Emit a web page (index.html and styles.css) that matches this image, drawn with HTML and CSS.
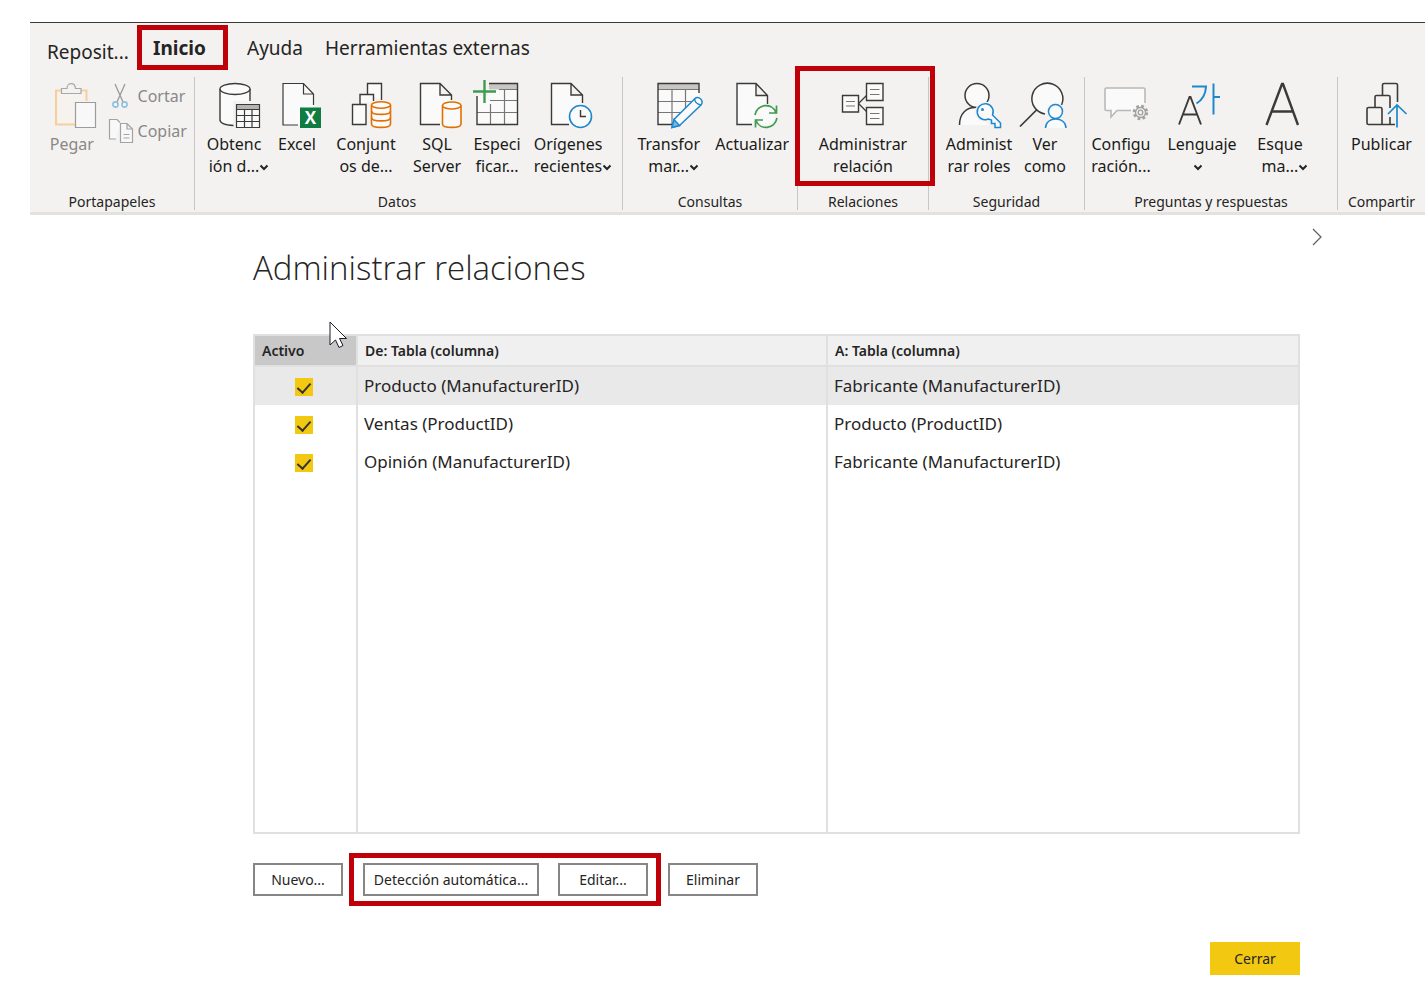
FILE: index.html
```html
<!DOCTYPE html>
<html lang="es">
<head>
<meta charset="utf-8">
<meta name="viewport" content="width=device-width, initial-scale=1">
<title>Administrar relaciones</title>
<link rel="stylesheet" href="styles.css">
</head>
<body>
<header class="ribbon">
  <nav class="tabs" aria-label="Cinta">
    <button type="button" class="tab tab-file">Reposit...</button>
    <button type="button" class="tab tab-active">Inicio</button>
    <button type="button" class="tab tab-help">Ayuda</button>
    <button type="button" class="tab tab-tools">Herramientas externas</button>
  </nav>
  <div class="groups">
    <section class="group">
      <div class="items items-clipboard">
        <button type="button" class="tool" disabled>
          <svg class="icon" viewBox="0 0 56 50"><path d="M17 10.500H12V44.500H31" fill="#fbf0dc" stroke="#f5cfa0" stroke-width="2"/><path d="M37 10.500H42.500V21" fill="none" stroke="#f5cfa0" stroke-width="2"/><path d="M14 13H41V21H30V43H14Z" fill="#f6f3ee"/><path d="M17.500 13.500V8.500H23C23 2 31 2 31.500 8.500H37V13.500Z" fill="#f3f2f0" stroke="#a8a8a8" stroke-width="1.200"/><path d="M31.500 22.500h20v25h-20z" fill="#f8f8f8" stroke="#9c9c9c" stroke-width="1.200"/></svg>
          <span class="label">Pegar</span>
        </button>
        <div class="small-tools">
          <button type="button" class="small-tool" disabled>
            <svg class="small-icon" viewBox="0 0 26 26"><path d="M7 1l8 18M17 1L9 19" fill="none" stroke="#999" stroke-width="1.300"/><circle cx="7.500" cy="21.500" r="2.600" fill="none" stroke="#8fc0e0" stroke-width="1.600"/><circle cx="16.500" cy="21.500" r="2.600" fill="none" stroke="#8fc0e0" stroke-width="1.600"/></svg>
            <span>Cortar</span>
          </button>
          <button type="button" class="small-tool" disabled>
            <svg class="small-icon" viewBox="0 0 26 26"><g fill="#f8f8f8" stroke="#a3a3a3" stroke-width="1.200"><path d="M8 21H1.500V1.500H9L12 4.500"/><path d="M12.500 5.500H19L24.500 11V24.500H12.500ZM19 5.500V11H24.500M15.500 16.500H21.500M15.500 20H21.500"/></g></svg>
            <span>Copiar</span>
          </button>
        </div>
      </div>
      <h2 class="group-name">Portapapeles</h2>
    </section>

    <section class="group">
      <div class="items items-data">
        <button type="button" class="tool">
          <svg class="icon" viewBox="0 0 56 50"><path d="M14 9V40c0 3 6 5 13 5.500V21H44V9" fill="#fafafa"/><path d="M27.500 45.500C20 45 14 43 14 40V9M44 9V21" fill="none" stroke="#3b3a39" stroke-width="1.400"/><ellipse cx="29" cy="9" rx="15" ry="5.500" fill="#fafafa" stroke="#3b3a39" stroke-width="1.400"/><path d="M30.500 24.500h23v23h-23z" fill="#fafafa"/><path d="M30.500 24.500h23v4.500h-23z" fill="#b5b2b0"/><path d="M30.500 24.500h23v23h-23zM30.500 29.500h23M30.500 35.500h23M30.500 41.500h23M38.500 29.500v18M46 29.500v18" fill="none" stroke="#3b3a39" stroke-width="1.200"/></svg>
          <span class="label">Obtenc<br>ión d...<svg class="chevron" viewBox="0 0 10 10"><path d="M1.500 3.500L5 7L8.500 3.500"/></svg></span>
        </button>
        <button type="button" class="tool">
          <svg class="icon" viewBox="0 0 56 50"><path d="M14 3.500H34.500L44.500 14V45H14Z" fill="#fafafa"/><path d="M29 45H14V3.500H34.500L44.500 14V25M34.500 3.500V14H44.500" fill="none" stroke="#3b3a39" stroke-width="1.200"/><path d="M31 27.500h21v20.500h-21z" fill="#107c41"/><text x="41.500" y="44" class="icon-letter">X</text></svg>
          <span class="label">Excel</span>
        </button>
        <button type="button" class="tool">
          <svg class="icon" viewBox="0 0 56 50"><g fill="#fafafa" stroke="#3b3a39" stroke-width="1.400"><path d="M29.500 14V3.500H43.500V20"/><path d="M22 24V14.500H35.500V21"/><path d="M14.500 24.500H28V44.500H14.500Z"/></g><path d="M33.500 25V44c0 4.500 19 4.500 19 0V25" fill="#fafafa" stroke="#e07000" stroke-width="1.600"/><ellipse cx="43" cy="25" rx="9.500" ry="3.300" fill="#fafafa" stroke="#e07000" stroke-width="1.600"/><path d="M33.500 31c0 4.500 19 4.500 19 0M33.500 37.500c0 4.500 19 4.500 19 0" fill="none" stroke="#e07000" stroke-width="1.600"/></svg>
          <span class="label">Conjunt<br>os de...</span>
        </button>
        <button type="button" class="tool">
          <svg class="icon" viewBox="0 0 56 50"><path d="M31 44.500H11.500V3.500H31L42.500 15V20M31 3.500V15H42.500" fill="#fafafa" stroke="#3b3a39" stroke-width="1.400"/><path d="M33.500 25.500V44c0 4.500 18.500 4.500 18.500 0V25.500" fill="#fafafa" stroke="#e07000" stroke-width="1.600"/><ellipse cx="42.750" cy="25.500" rx="9.250" ry="3.500" fill="#fafafa" stroke="#e07000" stroke-width="1.600"/></svg>
          <span class="label">SQL<br>Server</span>
        </button>
        <button type="button" class="tool">
          <svg class="icon" viewBox="0 0 56 50"><path d="M8 16h11V9h29.500v35.500H8z" fill="#fafafa"/><path d="M20 3.500h28.500v6H20z" fill="#c8c6c4"/><path d="M30 9.500H48M21 20.500H48M8 32.500H48M21.500 24V44M35.500 9.500V44" fill="none" stroke="#797775" stroke-width="1.200"/><path d="M20 3.500H48.500V44.500H8V16" fill="none" stroke="#3b3a39" stroke-width="1.400"/><path d="M15.500 0V23M4 11.500H27" fill="none" stroke="#3f9b50" stroke-width="2.400"/></svg>
          <span class="label">Especi<br>ficar...</span>
        </button>
        <button type="button" class="tool">
          <svg class="icon" viewBox="0 0 56 50"><path d="M29 44.500H11.500V3.500H31L42.500 15V23M31 3.500V15H42.500" fill="#fafafa" stroke="#3b3a39" stroke-width="1.400"/><circle cx="40.500" cy="36.500" r="11" fill="#fafafa" stroke="#1e88cf" stroke-width="1.600"/><path d="M40.500 30V36.500H46" fill="none" stroke="#3b3a39" stroke-width="1.400"/></svg>
          <span class="label">Orígenes<br>recientes<svg class="chevron" viewBox="0 0 10 10"><path d="M1.500 3.500L5 7L8.500 3.500"/></svg></span>
        </button>
      </div>
      <h2 class="group-name group-name-data">Datos</h2>
    </section>

    <section class="group">
      <div class="items items-queries">
        <button type="button" class="tool">
          <svg class="icon" viewBox="0 0 56 50"><path d="M17 3.500h41v41H17z" fill="#fafafa"/><path d="M17 3.500h41v6H17z" fill="#c8c6c4"/><path d="M17 9.500H58M17 21.500H50M17 32.500H40M31 9.500V44M44.500 9.500V28" fill="none" stroke="#797775" stroke-width="1.200"/><path d="M31 44.500H17V3.500H58V13" fill="none" stroke="#3b3a39" stroke-width="1.400"/><path d="M41 46H60V24Z" fill="#f3f2f0"/><path d="M31 47.500L33 39.500L54 18.500C57 15 63.500 20.500 60 25L38.500 45.500Z" fill="#fafafa" stroke="#1e88cf" stroke-width="1.500"/><path d="M31 47.500L33 39.500L38.500 45.500Z" fill="#7ab8e6" stroke="#1e88cf" stroke-width="1.500"/><path d="M53.500 18.500Q54 24 60 25" fill="none" stroke="#1e88cf" stroke-width="1.500"/></svg>
          <span class="label">Transfor<br>mar...<svg class="chevron" viewBox="0 0 10 10"><path d="M1.500 3.500L5 7L8.500 3.500"/></svg></span>
        </button>
        <button type="button" class="tool">
          <svg class="icon" viewBox="0 0 56 50"><path d="M28 44.500H13V3.500H32L43.500 15.500V24M32 3.500V15.500H43.500" fill="#fafafa" stroke="#3b3a39" stroke-width="1.400"/><circle cx="42" cy="36.500" r="9" fill="#fafafa"/><path d="M31 35C33 24 48 22 52 32.500M52.500 25.500V33H45M53 38C51 49 36 51 32 40.500M31.500 47.500V40H39" fill="none" stroke="#3f9b50" stroke-width="1.700"/></svg>
          <span class="label">Actualizar</span>
        </button>
      </div>
      <h2 class="group-name">Consultas</h2>
    </section>

    <section class="group group-marked">
      <div class="items items-single">
        <button type="button" class="tool">
          <svg class="icon" viewBox="0 0 56 50"><path d="M31.500 15.500L23.500 23.500L31.500 31.500" fill="none" stroke="#3b3a39" stroke-width="1.300"/><path d="M7.500 15.500h16v16.500h-16zM31.500 3.500h16.500v17h-16.500zM31.500 27.500h16.500v17h-16.500z" fill="#fafafa" stroke="#3b3a39" stroke-width="1.400"/><path d="M11 21.500h9M11 26h9M35 9.500h9.500M35 14.500h9.500M35 33.500h9.500M35 38.500h9.500" stroke="#797775" stroke-width="1.200"/></svg>
          <span class="label">Administrar<br>relación</span>
        </button>
      </div>
      <h2 class="group-name">Relaciones</h2>
    </section>

    <section class="group">
      <div class="items items-security">
        <button type="button" class="tool">
          <svg class="icon" viewBox="0 0 56 50"><path d="M8.500 45C8.500 33 16 27.500 24 27.500L32 38L38 45Z" fill="#fafafa"/><path d="M8.500 45C8.500 33 16 27.500 24 27.500" fill="none" stroke="#3b3a39" stroke-width="1.500"/><circle cx="26" cy="15.500" r="12" fill="#fafafa" stroke="#3b3a39" stroke-width="1.500"/><path d="M41.500 35L49.500 43V47.500H44V43.500H40.500V40L37.500 39A8 8 0 1 1 41.500 35Z" fill="#fafafa" stroke="#f3f2f0" stroke-width="4"/><path d="M41.500 35L49.500 43V47.500H44V43.500H40.500V40L37.500 39A8 8 0 1 1 41.500 35Z" fill="#fafafa" stroke="#1e88cf" stroke-width="1.500"/><circle cx="31.500" cy="29.500" r="1.500" fill="#1e88cf"/></svg>
          <span class="label">Administ<br>rar roles</span>
        </button>
        <button type="button" class="tool">
          <svg class="icon" viewBox="0 0 56 50"><path d="M28 34A15.500 15.500 0 1 1 44.500 25" fill="#fafafa" stroke="#3b3a39" stroke-width="1.500"/><path d="M19.500 30L3 46.500" fill="none" stroke="#3b3a39" stroke-width="1.700"/><circle cx="38.500" cy="31.500" r="9" fill="#f3f2f0"/><circle cx="38.500" cy="31.500" r="7" fill="#fafafa" stroke="#1e88cf" stroke-width="1.500"/><path d="M28.500 48C28.500 36 49 36 49 48" fill="#fafafa" stroke="#1e88cf" stroke-width="1.500"/></svg>
          <span class="label">Ver<br>como</span>
        </button>
      </div>
      <h2 class="group-name">Seguridad</h2>
    </section>

    <section class="group">
      <div class="items items-qa">
        <button type="button" class="tool">
          <svg class="icon" viewBox="0 0 56 50"><path d="M38 30.500H24L18 37V30.500H13.500Q12 30.500 12 29V9.500Q12 8 13.500 8H50.500Q52 8 52 9.500V23" fill="#fafafa" stroke="#b8b8b8" stroke-width="1.600"/><circle cx="47.500" cy="32.500" r="6.300" fill="none" stroke="#a0a0a0" stroke-width="2.800" stroke-dasharray="2.600 2.348"/><circle cx="47.500" cy="32.500" r="5" fill="#f3f2f0" stroke="#a0a0a0" stroke-width="1.300"/><circle cx="47.500" cy="32.500" r="2.300" fill="none" stroke="#a0a0a0" stroke-width="1.300"/></svg>
          <span class="label">Configu<br>ración...</span>
        </button>
        <button type="button" class="tool">
          <svg class="icon" viewBox="0 0 56 50"><path d="M5 44.500L15.500 17L16.500 17L27 44.500M8.500 34.500H23.500" fill="none" stroke="#3b3a39" stroke-width="1.900"/><path d="M18 6.500H32Q31.500 18 22.500 23.500M39.500 3.500V34.500M39.500 17H46" fill="none" stroke="#1e88cf" stroke-width="2"/></svg>
          <span class="label">Lenguaje<br><svg class="chevron chevron-alone" viewBox="0 0 10 10"><path d="M1.500 3.500L5 7L8.500 3.500"/></svg></span>
        </button>
        <button type="button" class="tool">
          <svg class="icon" viewBox="0 0 56 50"><path d="M14.500 45L30 4H31L46 45M19.500 31.500H41" fill="none" stroke="#3b3a39" stroke-width="2.400"/></svg>
          <span class="label">Esque<br>ma...<svg class="chevron" viewBox="0 0 10 10"><path d="M1.500 3.500L5 7L8.500 3.500"/></svg></span>
        </button>
      </div>
      <h2 class="group-name">Preguntas y respuestas</h2>
    </section>

    <section class="group">
      <div class="items items-single">
        <button type="button" class="tool">
          <svg class="icon" viewBox="0 0 56 50"><path d="M28.500 15V5Q28.500 3.500 30 3.500H42Q43.500 3.500 43.500 5V22M21 27V17Q21 15.500 22.500 15.500H34.500Q36 15.500 36 17V28M14.500 27.500H26.500Q28 27.500 28 29V44.500H14.500Q13 44.500 13 43V29Q13 27.500 14.500 27.500ZM28 44.500H41M36 37V44.500" fill="none" stroke="#3b3a39" stroke-width="1.600"/><path d="M43 47.500V25M34 34L43 25L52.500 34" fill="none" stroke="#1e88cf" stroke-width="1.700"/></svg>
          <span class="label">Publicar</span>
        </button>
      </div>
      <h2 class="group-name">Compartir</h2>
    </section>
  </div>
</header>

<main class="page">
  <button type="button" class="expand" aria-label="Expandir"><svg class="expand-icon" viewBox="0 0 10 18"><path d="M1 1L9 9L1 17"/></svg></button>
  <h1 class="title">Administrar relaciones</h1>
  <div class="table-wrap">
    <table class="relations">
      <colgroup><col class="col-active"><col><col></colgroup>
      <thead>
        <tr><th class="sorted" scope="col">Activo</th><th scope="col">De: Tabla (columna)</th><th scope="col">A: Tabla (columna)</th></tr>
      </thead>
      <tbody>
        <tr class="selected"><td class="check-cell"><input class="check" type="checkbox" aria-label="Producto activo" checked></td><td>Producto (ManufacturerID)</td><td>Fabricante (ManufacturerID)</td></tr>
        <tr><td class="check-cell"><input class="check" type="checkbox" aria-label="Ventas activo" checked></td><td>Ventas (ProductID)</td><td>Producto (ProductID)</td></tr>
        <tr><td class="check-cell"><input class="check" type="checkbox" aria-label="Opinión activo" checked></td><td>Opinión (ManufacturerID)</td><td>Fabricante (ManufacturerID)</td></tr>
        <tr class="filler"><td></td><td></td><td></td></tr>
      </tbody>
    </table>
    <svg class="pointer" viewBox="0 0 18 28"><path d="M1 1V24L6.500 19L10 26.500L14 24.500L10.500 17.500H17.500Z"/></svg>
  </div>
  <div class="actions">
    <button type="button" class="btn">Nuevo...</button>
    <div class="marked-actions">
      <button type="button" class="btn btn-wide">Detección automática...</button>
      <button type="button" class="btn">Editar...</button>
    </div>
    <button type="button" class="btn">Eliminar</button>
  </div>
  <div class="footer">
    <button type="button" class="btn btn-close">Cerrar</button>
  </div>
</main>
</body>
</html>
```
FILE: styles.css
```css
* { box-sizing: border-box; }

body {
  margin: 0;
  background: #fff;
  color: #252423;
  font-family: "Noto Sans", "Open Sans", sans-serif;
  font-size: 16px;
}

button {
  margin: 0;
  padding: 0;
  border: 0;
  background: none;
  color: inherit;
  font: inherit;
}

.ribbon {
  margin: 22px 0 0 30px;
  padding-bottom: 2px;
  border-top: 1px solid #3b3a39;
  border-bottom: 3px solid #e3e2e1;
  background: #f3f2f0;
  overflow: hidden;
}

.tabs {
  display: flex;
  align-items: flex-start;
  height: 54px;
  padding: 2px 0 0 17px;
}

.tab {
  height: 45px;
  font-size: 19px;
  white-space: nowrap;
}

.tab-file { width: 90px; padding-top: 8px; text-align: left; }
.tab-active { width: 91px; border: 5px solid #c00008; font-weight: 700; padding-right: 6px; }
.tab-help { width: 60px; margin-left: 17px; }
.tab-tools { margin-left: 20px; }

.groups {
  display: grid;
  grid-template-columns: 165fr 428fr 175fr 131fr 156fr 253fr 87fr;
}

.group {
  position: relative;
  display: flex;
  flex-direction: column;
  min-width: 0;
  border-right: 1px solid #c8c6c4;
}

.group:last-child { border-right: 0; }

.group-marked::after {
  content: "";
  position: absolute;
  inset: -11px -7px 24px -3px;
  z-index: 1;
  border: 5px solid #c00008;
}

.items {
  display: grid;
  height: 116px;
  padding-top: 3px;
}

.items-clipboard { grid-template-columns: 72fr 87fr; padding-left: 6px; }
.items-data { grid-template-columns: 66fr 60fr 78fr 64fr 56fr 86fr; padding: 3px 11px 0 6px; }
.items-queries { grid-template-columns: 80fr 88fr; padding: 3px 1px 0 6px; }
.items-single { grid-template-columns: 1fr; }
.items-security { grid-template-columns: 76fr 56fr; padding: 3px 11px 0 12px; }
.items-qa { grid-template-columns: 72fr 90fr 66fr; padding: 3px 24px 0 0; }

.tool {
  display: flex;
  flex-direction: column;
  align-items: center;
  gap: 3px;
  min-width: 0;
  color: #1b1a19;
}

.tool:disabled, .small-tool:disabled { color: #8a8886; }

.icon { flex: none; width: 56px; height: 50px; overflow: visible; }

.icon-letter {
  fill: #fff;
  font: 700 17px "Open Sans", sans-serif;
  text-anchor: middle;
}

.label { line-height: 22px; white-space: nowrap; }

.chevron {
  width: 10px;
  height: 10px;
  margin-right: -10px;
  fill: none;
  stroke: #252423;
  stroke-width: 2;
}

.chevron-alone { margin: 0 8px 0 0; }

.small-tools { display: flex; flex-direction: column; gap: 9px; padding-top: 3px; }

.small-tool {
  display: flex;
  align-items: center;
  gap: 4px;
  height: 26px;
}

.small-icon { width: 26px; height: 26px; }

.group-name {
  margin: 0;
  font-size: 14px;
  font-weight: 400;
  line-height: 17px;
  text-align: center;
  white-space: nowrap;
}

.group-name-data { padding-right: 23px; }

.page { padding: 13px 125px 0 253px; }

.expand { display: block; margin: 0 -22px 0 auto; height: 18px; line-height: 0; }
.expand-icon { width: 10px; height: 18px; fill: none; stroke: #605e5c; stroke-width: 1.200; }

.title {
  margin: 0 0 44px;
  font-family: "Open Sans", sans-serif;
  font-size: 33px;
  font-weight: 300;
  line-height: 44px;
}

.table-wrap { position: relative; }

.relations {
  width: 100%;
  height: 500px;
  border: 2px solid #e0e0e0;
  border-collapse: separate;
  border-spacing: 0;
  table-layout: fixed;
}

.col-active { width: 103px; }

.relations th {
  height: 31px;
  padding: 0 7px;
  border-bottom: 2px solid #e0e0e0;
  background: #f0f0f0;
  font-size: 14px;
  font-weight: 600;
  text-align: left;
}

.relations td { height: 38px; padding: 0 6px 2px; font-size: 17px; }

.relations th:not(:last-child), .relations td:not(:last-child) { border-right: 2px solid #e0e0e0; }

.relations th.sorted { background: #c8c8c8; }

.relations .selected td { background: #e9e9e9; }

.relations .filler td { height: auto; }

.relations .check-cell { padding: 2px 10px 0 6px; }

.check {
  appearance: none;
  display: block;
  width: 18px;
  height: 18px;
  margin: 0 auto;
  background: #f2c811;
}

.check:checked::before {
  content: "";
  display: block;
  width: 6px;
  height: 11px;
  margin: 0 auto;
  border: solid #333;
  border-width: 0 2px 2px 0;
  transform: translateY(2px) rotate(42deg);
}

.pointer {
  position: absolute;
  left: 76px;
  top: -13px;
  width: 18px;
  height: 28px;
  fill: #fff;
  stroke: #1b1a29;
}

.actions {
  display: flex;
  align-items: center;
  gap: 6px;
  margin-top: 19px;
}

.marked-actions {
  display: flex;
  gap: 19px;
  padding: 5px 8px 5px 9px;
  border: 5px solid #c00008;
  margin-right: 1px;
}

.btn {
  width: 90px;
  height: 33px;
  border: 2px solid #868686;
  background: #fff;
  font-size: 14px;
  white-space: nowrap;
}

.btn-wide { width: 176px; }

.footer { display: flex; justify-content: flex-end; margin-top: 36px; padding-bottom: 15px; }

.btn-close { border-color: #f2c811; background: #f2c811; }
```
